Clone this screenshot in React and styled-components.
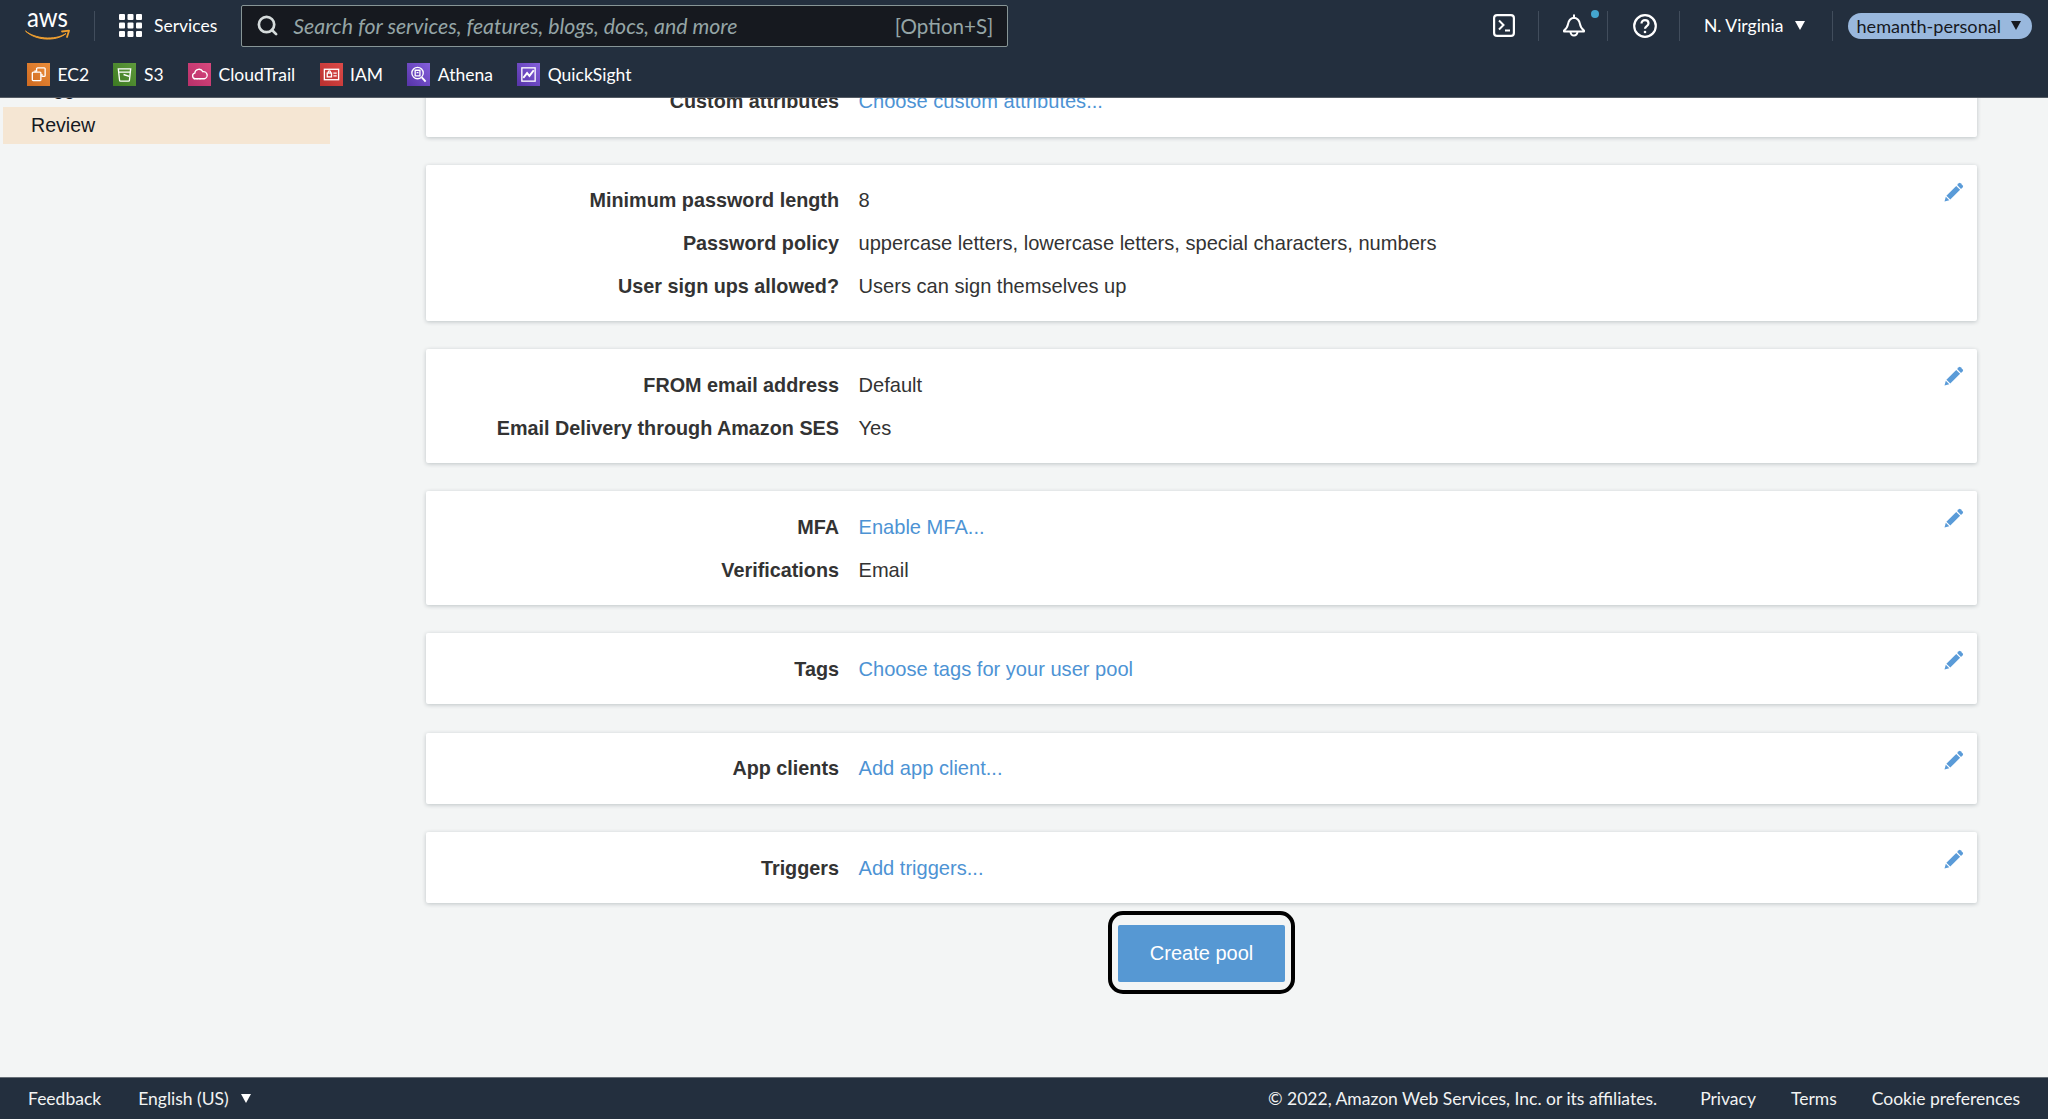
import React from "react";
import styled, { createGlobalStyle } from "styled-components";
import { FiSearch } from "react-icons/fi";

const GlobalStyle = createGlobalStyle`
  html, body { margin: 0; padding: 0; height: 100%; }
  body { background: #f3f5f5; font-family: "Liberation Sans", Arial, sans-serif; }
  #root { height: 100%; }
`;

const Shell = styled.div`
  height: 100vh;
  display: flex;
  flex-direction: column;
  overflow: hidden;
`;

// Top navigation ----------------------------------------------------------------

const Header = styled.header`
  flex: none;
  height: 98px;
  box-sizing: border-box;
  background: #232f3e;
  border-bottom: 1px solid #545b64;
  display: flex;
  flex-direction: column;
  font-family: Lato, "Open Sans", sans-serif;
  color: #fff;
`;

const TopRow = styled.div`
  height: 51px;
  display: flex;
  align-items: center;
  padding: 0 16px 0 25px;
`;

const Sep = styled.span`
  flex: none;
  width: 1px;
  height: 30px;
  background: #414d5c;
  margin: ${(p) => p.$m || "0"};
`;

const ServicesBtn = styled.div`
  display: flex;
  align-items: center;
  gap: 12px;
  font-size: 17.5px;
  margin-left: 24px;
`;

const Search = styled.div`
  width: 767px;
  height: 42px;
  box-sizing: border-box;
  margin-left: 24px;
  background: #16191f;
  border: 1px solid #879596;
  border-radius: 2px;
  display: flex;
  align-items: center;
  padding: 0 14px;
  font-size: 20.6px;
  color: #95a5a6;
`;

const SearchText = styled.span`
  flex: 1;
  font-style: italic;
  font-size: 21.3px;
  margin-left: 14px;
`;

const Actions = styled.div`
  margin-left: auto;
  display: flex;
  align-items: center;
`;

const BellWrap = styled.span`
  position: relative;
  display: flex;
`;

const Dot = styled.span`
  position: absolute;
  width: 8px;
  height: 8px;
  left: 28px;
  top: -4px;
  border-radius: 50%;
  background: #44a6cf;
`;

const Region = styled.div`
  font-size: 17.5px;
  display: flex;
  align-items: center;
  gap: 11px;
`;

const Account = styled.div`
  height: 26px;
  padding: 0 11px 0 9px;
  border-radius: 13px;
  background: #99b8dd;
  color: #16191f;
  font-size: 18.1px;
  display: flex;
  align-items: center;
  gap: 10px;
`;

const Caret = styled.span`
  width: 0;
  height: 0;
  border-left: 5.5px solid transparent;
  border-right: 5.5px solid transparent;
  border-top: 9px solid ${(p) => p.$color || "#fff"};
`;

const Favorites = styled.div`
  flex: 1;
  display: flex;
  align-items: center;
  padding: 0 0 0 27px;
  gap: 24.3px;
  font-size: 17.5px;
`;

const Fav = styled.div`
  display: flex;
  align-items: center;
  gap: 7.5px;
`;

const FavIcon = styled.span`
  width: 23px;
  height: 23px;
  display: flex;
  align-items: center;
  justify-content: center;
  background: linear-gradient(45deg, ${(p) => p.$from}, ${(p) => p.$to});
`;

// Page body ----------------------------------------------------------------

const Body = styled.div`
  flex: 1;
  min-height: 0;
  overflow: hidden;
  display: grid;
  grid-template-columns: 426px 1551px;
`;

const Sidebar = styled.nav`
  padding-left: 3px;
  margin-top: -28px;
  font-size: 19.6px;
  color: #16191f;
`;

const NavItem = styled.div`
  width: 327px;
  height: 37px;
  box-sizing: border-box;
  padding-left: 28px;
  display: flex;
  align-items: center;
  background: ${(p) => (p.$active ? "#f5e6d3" : "transparent")};
`;

const Content = styled.main`
  display: flex;
  flex-direction: column;
  gap: 28.3px;
  margin-top: -15px;
`;

const Card = styled.section`
  position: relative;
  background: #fff;
  border-radius: 2px;
  box-shadow: 0 1px 4px rgba(0, 28, 36, 0.22);
  padding: ${(p) => p.$pad || "17.5px 0"};
  display: flex;
  flex-direction: column;
  gap: 6.7px;
  font-size: 20.08px;
  line-height: 36px;
  color: #333;
`;

const Row = styled.div`
  display: grid;
  grid-template-columns: 413px 1fr;
  column-gap: 19.5px;
  height: 36px;
`;

const Label = styled.div`
  text-align: right;
  font-weight: 700;
  font-size: 19.8px;
`;

const Value = styled.div``;

const LinkValue = styled.span`
  color: #4d93d4;
`;

const EditIcon = styled.svg`
  position: absolute;
  right: 13px;
  top: 17px;
  width: 20px;
  height: 20px;
  fill: #5a9bd8;
`;

const Actionbar = styled.div`
  display: flex;
  justify-content: center;
  margin-top: -20.3px;
`;

const FocusRing = styled.div`
  border: 4px solid #000;
  border-radius: 15px;
  padding: 10px 6px 8px;
  display: flex;
`;

const CreateBtn = styled.button`
  width: 167px;
  height: 57px;
  border: 0;
  border-radius: 2px;
  background: #5698d3;
  color: #fff;
  font: 400 20px "Liberation Sans", Arial, sans-serif;
`;

// Footer ----------------------------------------------------------------

const Footer = styled.footer`
  flex: none;
  height: 42px;
  box-sizing: border-box;
  background: #232f3e;
  border-top: 1px solid #687078;
  display: flex;
  align-items: center;
  padding: 0 28px;
  color: #f2f3f3;
  font-family: Lato, "Open Sans", sans-serif;
  font-size: 17.5px;
`;

const FootLeft = styled.div`
  display: flex;
  align-items: center;
  gap: 37px;
`;

const Lang = styled.span`
  display: flex;
  align-items: center;
  gap: 12px;
`;

const FootRight = styled.div`
  margin-left: auto;
  display: flex;
  gap: 35px;
`;

const Copyright = styled.span`
  margin-right: 8px;
`;

const AwsLogo = () => (
  <svg width="46" height="30" viewBox="0 0 46 30" style={{ overflow: "visible" }}>
    <text x="2" y="15.500" fill="#fff" fontFamily="Lato, sans-serif" fontSize="27" textLength="41" lengthAdjust="spacingAndGlyphs">aws</text>
    <path d="M.5 20c9 7.500 29 10 40.500 2.500C31 31 10 29.500.5 20z" fill="#f0a030" stroke="#f0a030" strokeWidth="1" strokeLinejoin="round" />
    <path d="M37 20.500l7-.8-2 6.300" fill="none" stroke="#f0a030" strokeWidth="1.800" strokeLinecap="round" strokeLinejoin="round" />
  </svg>
);

const GridIcon = () => (
  <svg width="23" height="23" viewBox="0 0 23 23" fill="#fff">
    {[0, 8.5, 17].flatMap((y) =>
      [0, 8.5, 17].map((x) => <rect key={`${x}-${y}`} x={x} y={y} width="6" height="6" rx="1" />)
    )}
  </svg>
);

const TerminalIcon = () => (
  <svg width="22" height="23" viewBox="0 0 22 23" fill="none" stroke="#fff" strokeWidth="2.200">
    <rect x="1.100" y="1.100" width="19.800" height="20.800" rx="3" />
    <path d="M6 6.500l4.500 4.500L6 15.500M12 16.500h5" strokeWidth="2" />
  </svg>
);

const BellIcon = () => (
  <svg width="22" height="24" viewBox="0 0 22 24" fill="none" stroke="#fff" strokeWidth="2" strokeLinejoin="round">
    <path d="M11 1.200v2.500c-3.500.5-5.500 3-6 6.500-.4 3-1.500 4.500-4 6.300v1h20v-1c-2.500-1.800-3.600-3.300-4-6.300-.5-3.500-2.500-6-6-6.500z" />
    <path d="M7.500 17.800a3.500 3.800 0 0 0 7 0" />
  </svg>
);

const HelpIcon = () => (
  <svg width="24" height="24" viewBox="0 0 24 24" fill="none" stroke="#fff" strokeWidth="2.200">
    <circle cx="12" cy="12" r="10.800" />
    <path d="M8.500 9.500c0-2 1.500-3.400 3.500-3.400s3.500 1.400 3.500 3.200c0 2.800-3.500 2.700-3.500 5.500" />
    <circle cx="12" cy="18" r="1.300" fill="#fff" stroke="none" />
  </svg>
);

const favorites = [
  {
    name: "EC2",
    from: "#cf6a20",
    to: "#ea8d3a",
    icon: (
      <>
        <path d="M8 7V4a1 1 0 0 1 1-1h7a1 1 0 0 1 1 1v7a1 1 0 0 1-1 1h-3" />
        <rect x="3.500" y="7.500" width="9" height="9" rx="1" />
        <path d="M6.500 7.500V5.500M12.500 10.500h2" />
      </>
    ),
  },
  {
    name: "S3",
    from: "#3d7a22",
    to: "#5f9a3c",
    icon: (
      <>
        <path d="M3.500 4h13l-1.300 12a1 1 0 0 1-1 1H5.800a1 1 0 0 1-1-1z" />
        <path d="M4 7.500h12M9 10l6 2" />
      </>
    ),
  },
  {
    name: "CloudTrail",
    from: "#b8306a",
    to: "#d9487d",
    icon: (
      <>
        <path d="M5.500 14.500a3 3 0 0 1-.5-5.900 4.500 4.500 0 0 1 8.500-1.600 3.800 3.800 0 0 1 1.500 7.500z" />
        <path d="M4 14.500h1M7 14.500h1M10 14.500h1" strokeDasharray="1 1" />
      </>
    ),
  },
  {
    name: "IAM",
    from: "#b9302f",
    to: "#dd4a48",
    icon: (
      <>
        <rect x="2.500" y="4.500" width="15" height="11" />
        <rect x="5.500" y="8.500" width="4.500" height="4" />
        <path d="M6.500 8.500V7.500a1.200 1.200 0 0 1 2.500 0v1M12 8.500h3.500M12 11.500h3.500" />
      </>
    ),
  },
  {
    name: "Athena",
    from: "#5633a8",
    to: "#8560dc",
    icon: (
      <>
        <circle cx="9" cy="8.500" r="6" />
        <path d="M13.500 13l4 4.500" strokeWidth="2" />
        <path d="M6.500 5.500h5v6h-5zM8 8h2" />
      </>
    ),
  },
  {
    name: "QuickSight",
    from: "#5633a8",
    to: "#8560dc",
    icon: (
      <>
        <rect x="3" y="3" width="14" height="14" />
        <path d="M4.500 13.500l4-5 2.500 3 4.500-6" strokeWidth="2" />
      </>
    ),
  },
];

const cards = [
  { rows: [["Custom attributes", "Choose custom attributes...", true]], pad: "0 0 17.5px", noEdit: true },
  {
    rows: [
      ["Minimum password length", "8"],
      ["Password policy", "uppercase letters, lowercase letters, special characters, numbers"],
      ["User sign ups allowed?", "Users can sign themselves up"],
    ],
  },
  { rows: [["FROM email address", "Default"], ["Email Delivery through Amazon SES", "Yes"]] },
  { rows: [["MFA", "Enable MFA...", true], ["Verifications", "Email"]] },
  { rows: [["Tags", "Choose tags for your user pool", true]] },
  { rows: [["App clients", "Add app client...", true]] },
  { rows: [["Triggers", "Add triggers...", true]] },
];

export default function App() {
  return (
    <Shell>
      <GlobalStyle />
      <Header>
        <TopRow>
          <AwsLogo />
          <Sep $m="0 0 0 23px" />
          <ServicesBtn>
            <GridIcon />
            Services
          </ServicesBtn>
          <Search>
            <FiSearch size={23} color="#d5dbdb" strokeWidth={2.8} />
            <SearchText>Search for services, features, blogs, docs, and more</SearchText>
            [Option+S]
          </Search>
          <Actions>
            <TerminalIcon />
            <Sep $m="0 24px 0 23px" />
            <BellWrap>
              <BellIcon />
              <Dot />
            </BellWrap>
            <Sep $m="0 25px 0 22px" />
            <HelpIcon />
            <Sep $m="0 24px 0 22px" />
            <Region>
              N. Virginia
              <Caret />
            </Region>
            <Sep $m="0 15px 0 27px" />
            <Account>
              hemanth-personal
              <Caret $color="#16191f" />
            </Account>
          </Actions>
        </TopRow>
        <Favorites>
          {favorites.map((f) => (
            <Fav key={f.name}>
              <FavIcon $from={f.from} $to={f.to}>
                <svg width="19" height="19" viewBox="0 0 20 20" fill="none" stroke="#fff" strokeWidth="1.400">
                  {f.icon}
                </svg>
              </FavIcon>
              {f.name}
            </Fav>
          ))}
        </Favorites>
      </Header>
      <Body>
        <Sidebar>
          <NavItem>Triggers</NavItem>
          <NavItem $active>Review</NavItem>
        </Sidebar>
        <Content>
          {cards.map((c) => (
            <Card key={c.rows[0][0]} $pad={c.pad}>
              {c.rows.map(([label, value, link]) => (
                <Row key={label}>
                  <Label>{label}</Label>
                  <Value>{link ? <LinkValue>{value}</LinkValue> : value}</Value>
                </Row>
              ))}
              {!c.noEdit && (
                <EditIcon viewBox="0 0 20 20">
                  <path d="M14.800 1.300a1.300 1.300 0 0 1 1.800 0l2.100 2.100a1.300 1.300 0 0 1 0 1.800l-1.700 1.700-3.900-3.900z" />
                  <path d="M12.200 3.900l3.900 3.900L6.300 17.600l-3.900-3.900zM1.800 14.700l3.500 3.500L.5 19.500z" />
                </EditIcon>
              )}
            </Card>
          ))}
          <Actionbar>
            <FocusRing>
              <CreateBtn>Create pool</CreateBtn>
            </FocusRing>
          </Actionbar>
        </Content>
      </Body>
      <Footer>
        <FootLeft>
          <span>Feedback</span>
          <Lang>
            English (US)
            <Caret />
          </Lang>
        </FootLeft>
        <FootRight>
          <Copyright>© 2022, Amazon Web Services, Inc. or its affiliates.</Copyright>
          <span>Privacy</span>
          <span>Terms</span>
          <span>Cookie preferences</span>
        </FootRight>
      </Footer>
    </Shell>
  );
}
